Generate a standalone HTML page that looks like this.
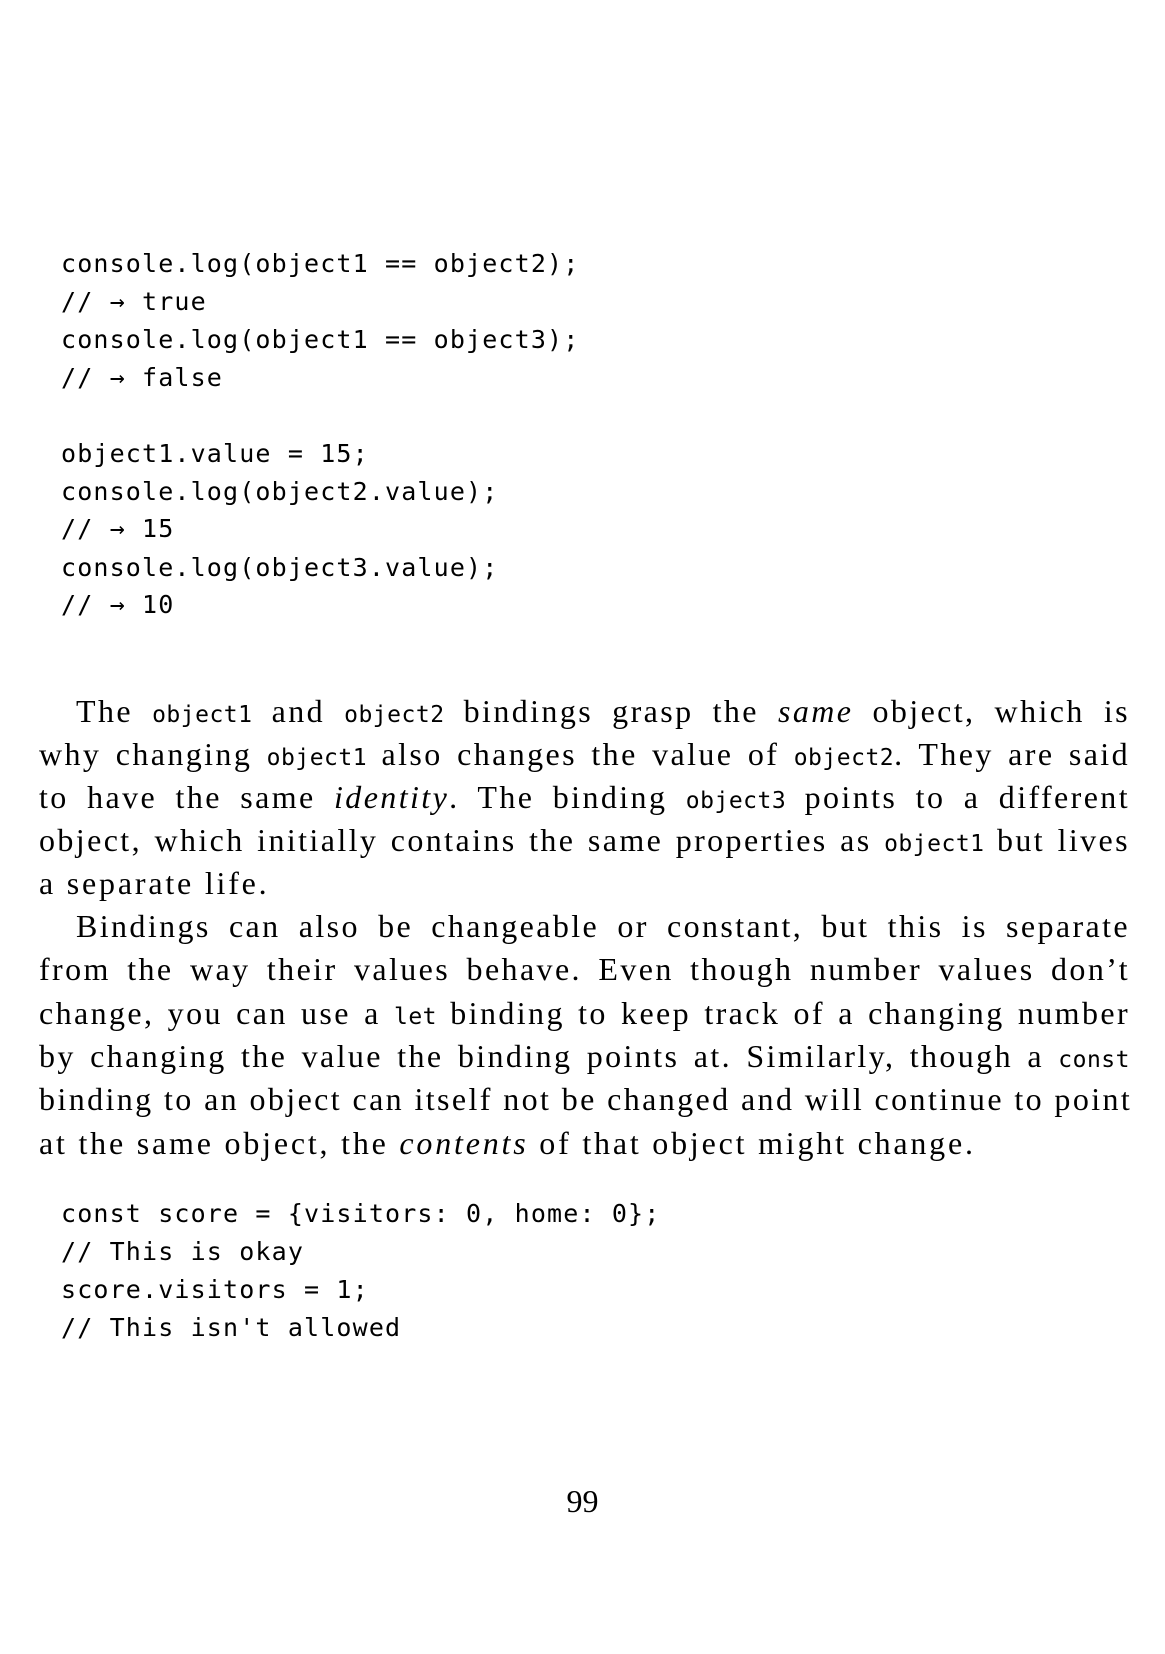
<!DOCTYPE html>
<html><head><meta charset="utf-8"><style>
body{margin:0;width:1165px;height:1654px;background:#fff;position:relative;overflow:hidden;color:#000}
.c{position:absolute;left:61px;font-family:"DejaVu Sans Mono","Liberation Mono",monospace;font-size:25px;line-height:38px;white-space:pre;letter-spacing:1.15px}
.t{position:absolute;left:39px;width:1091px;font-family:"Liberation Serif",serif;font-size:32px;letter-spacing:2.4px;line-height:43px;text-align:justify;text-align-last:justify;white-space:nowrap}
.t.l{text-align-last:left;letter-spacing:2.8px}
.t code{font-family:"DejaVu Sans Mono","Liberation Mono",monospace;font-size:23px;letter-spacing:0.5px}
.pn{position:absolute;left:0;width:1165px;text-align:center;top:1480px;font-family:"Liberation Serif",serif;font-size:32px;line-height:43px}
</style></head><body>
<div class="c" style="top:245px">console.log(object1 == object2);</div>
<div class="c" style="top:283px">// → true</div>
<div class="c" style="top:321px">console.log(object1 == object3);</div>
<div class="c" style="top:359px">// → false</div>
<div class="c" style="top:435px">object1.value = 15;</div>
<div class="c" style="top:473px">console.log(object2.value);</div>
<div class="c" style="top:510px">// → 15</div>
<div class="c" style="top:549px">console.log(object3.value);</div>
<div class="c" style="top:586px">// → 10</div>

<div class="t" style="top:690px;left:76px;width:1054px">The <code>object1</code> and <code>object2</code> bindings grasp the <i>same</i> object, which is</div>
<div class="t" style="top:733px">why changing <code>object1</code> also changes the value of <code>object2</code>. They are said</div>
<div class="t" style="top:776px">to have the same <i>identity</i>. The binding <code>object3</code> points to a different</div>
<div class="t" style="top:819px">object, which initially contains the same properties as <code>object1</code> but lives</div>
<div class="t l" style="top:862px">a separate life.</div>
<div class="t" style="top:905px;left:76px;width:1054px">Bindings can also be changeable or constant, but this is separate</div>
<div class="t" style="top:948px">from the way their values behave. Even though number values don’t</div>
<div class="t" style="top:992px">change, you can use a <code>let</code> binding to keep track of a changing number</div>
<div class="t" style="top:1035px">by changing the value the binding points at. Similarly, though a <code>const</code></div>
<div class="t" style="top:1078px">binding to an object can itself not be changed and will continue to point</div>
<div class="t l" style="top:1122px">at the same object, the <i>contents</i> of that object might change.</div>

<div class="c" style="top:1195px">const score = {visitors: 0, home: 0};</div>
<div class="c" style="top:1233px">// This is okay</div>
<div class="c" style="top:1271px">score.visitors = 1;</div>
<div class="c" style="top:1309px">// This isn't allowed</div>

<div class="pn">99</div>
</body></html>
